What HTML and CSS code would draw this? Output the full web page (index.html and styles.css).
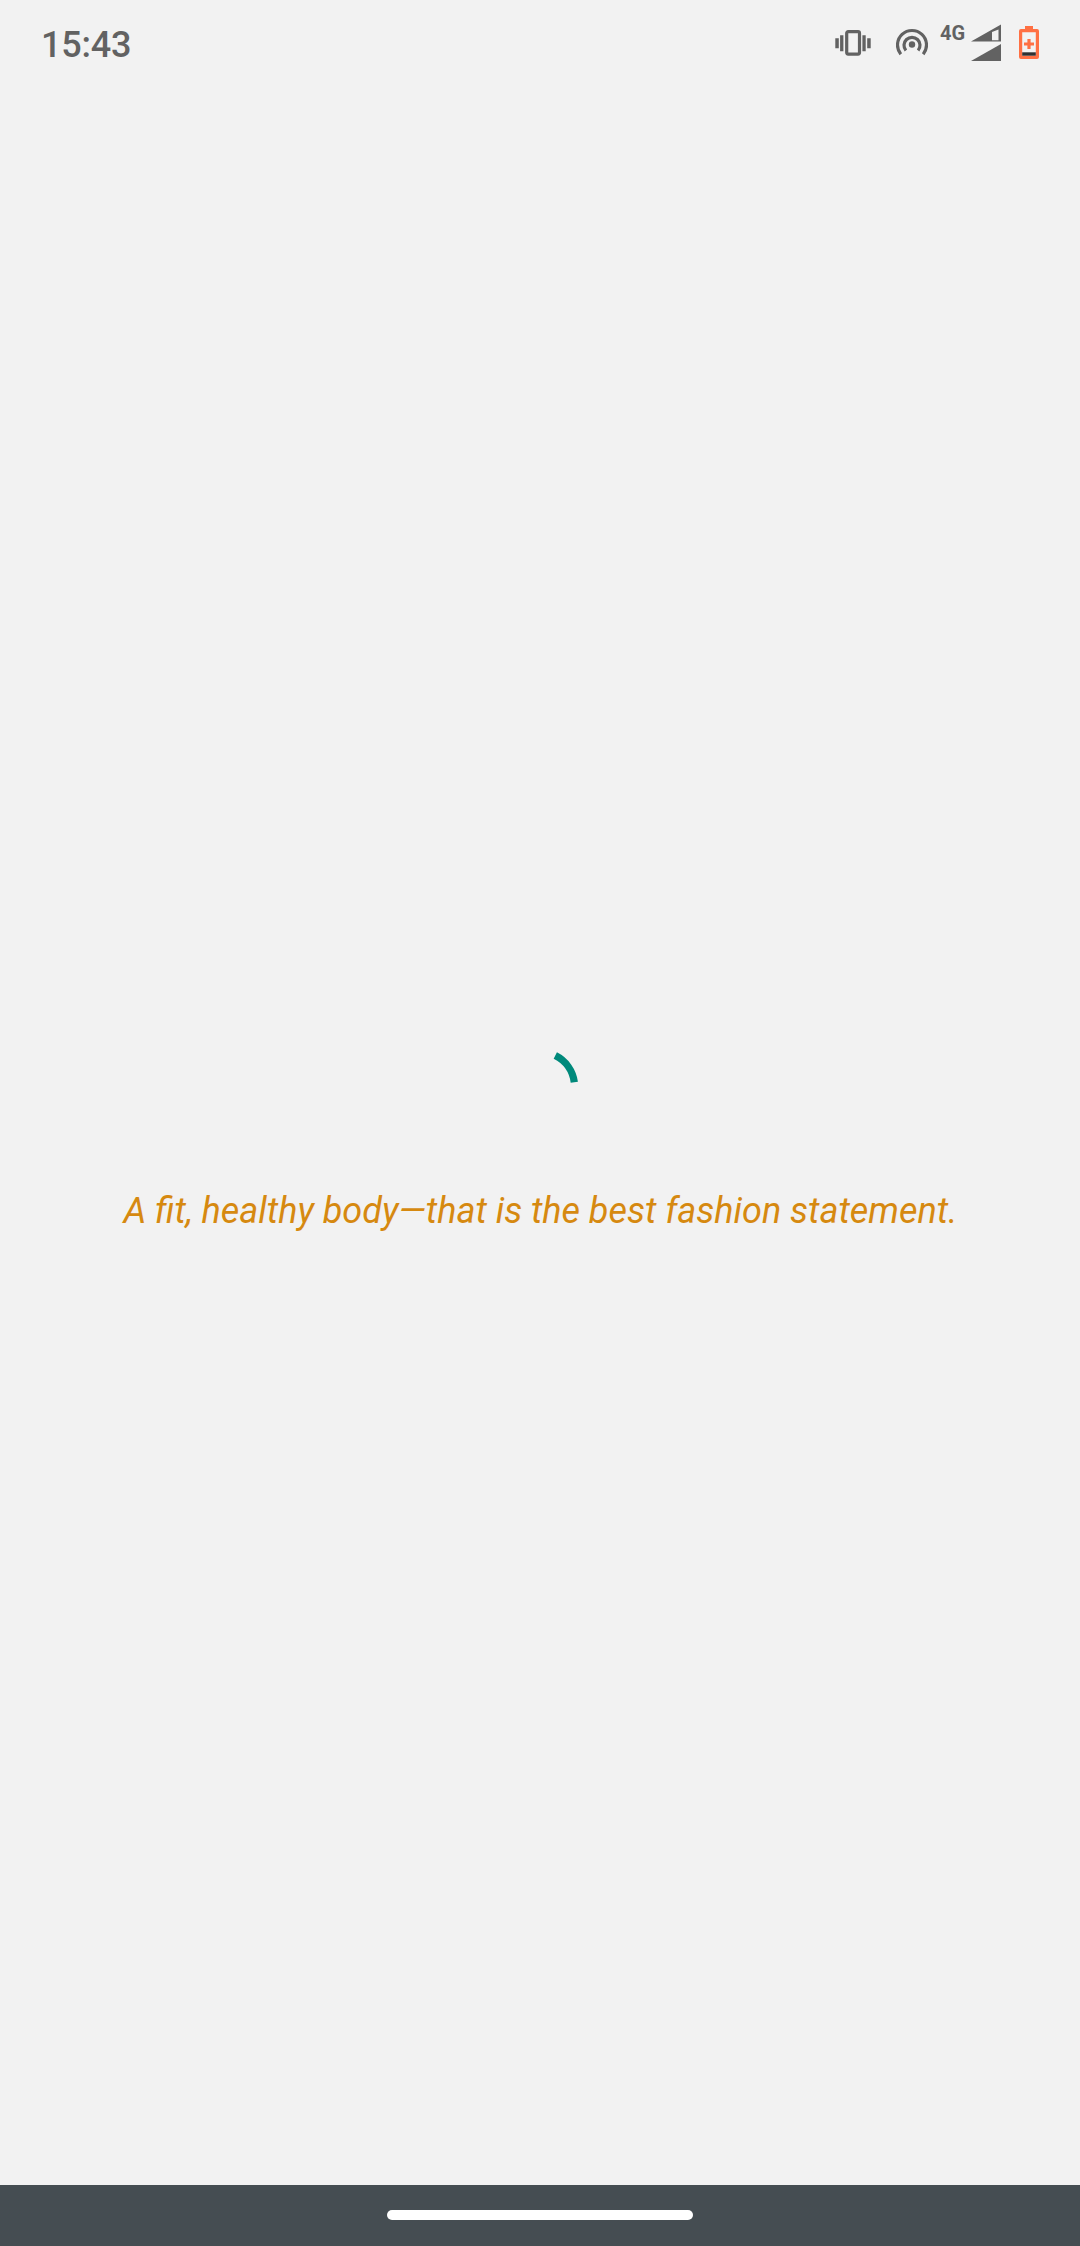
FILE: index.html
```html
<!DOCTYPE html>
<html lang="en">
<head>
<meta charset="utf-8">
<title>Loading</title>
<link rel="stylesheet" href="styles.css">
</head>
<body>
<div class="screen">
  <header class="status-bar">
    <span class="clock">15:43</span>
    <div class="status-icons">
      <svg class="icon-vibrate" width="36" height="28" viewBox="0 0 36 28" fill="currentColor">
        <path d="M0.300 9.200h3.500v10H0.300zM5.100 6.200h3.300v16H5.100zM27.400 6.200h3.300v16h-3.300zM32.200 9.200h3.500v10h-3.500z"/>
        <rect x="11.700" y="2.700" width="12.800" height="22.400" rx="1.500" fill="none" stroke="currentColor" stroke-width="3.200"/>
      </svg>
      <svg class="icon-hotspot" width="32" height="30" viewBox="0 0 32 30" fill="none" stroke="currentColor" stroke-width="3.200">
        <path d="M4.800 26.200A14.500 14.500 0 1 1 27.200 26.200"/>
        <path d="M9.900 22.500A8 8 0 1 1 22.100 22.500"/>
        <circle cx="16" cy="16.500" r="3.200" fill="currentColor" stroke="none"/>
      </svg>
      <span class="network">4G</span>
      <svg class="icon-signal" width="30" height="38" viewBox="0 0 30 38" fill="currentColor">
        <path fill-rule="evenodd" d="M0 18.500L30 1.500v17zM21 9v8.200h6.500V6.500z"/>
        <path d="M0 38L30 21v17z"/>
      </svg>
      <svg class="icon-battery" width="20" height="34" viewBox="0 0 20 34">
        <path fill="#ff7043" fill-rule="evenodd" d="M6 1h8v3h4a2 2 0 0 1 2 2v26a2 2 0 0 1-2 2H2a2 2 0 0 1-2-2V6a2 2 0 0 1 2-2h4zM3.200 7.200v23.500h13.600V7.200z"/>
        <path fill="#ff7043" d="M8.400 14h3.200v3.400H15v3.200h-3.400V24H8.400v-3.400H5v-3.200h3.400z"/>
        <path fill="#303030" d="M3.200 27.300h13.600v3.400H3.200z"/>
      </svg>
    </div>
  </header>
  <main class="content">
    <svg class="spinner" width="80" height="80" viewBox="0 0 80 80" fill="none" stroke="#00897b" stroke-width="7.300">
      <path d="M55.300 8.600A35 35 0 0 1 74.300 35.200"/>
    </svg>
    <p class="quote">A fit, healthy body—that is the best fashion statement.</p>
  </main>
  <footer class="nav-bar"><div class="handle"></div></footer>
</div>
</body>
</html>
```

FILE: styles.css
```css
* {
  box-sizing: border-box;
}

body {
  margin: 0;
  background: #f2f2f2;
  font-family: Roboto, sans-serif;
}

.screen {
  display: flex;
  flex-direction: column;
  height: 2246px;
}

.status-bar {
  display: flex;
  justify-content: space-between;
  height: 88px;
  padding: 23px 41px 0;
  color: #626262;
}

.clock {
  margin-top: 1px;
  font-size: 36px;
  font-weight: 500;
  letter-spacing: -0.25px;
  line-height: 42px;
}

.status-icons {
  display: flex;
  align-items: flex-start;
}

.icon-vibrate {
  margin: 6px 25px 0 0;
}

.icon-hotspot {
  margin: 5px 12px 0 0;
}

.network {
  width: 31px;
  font-size: 20px;
  font-weight: 700;
  line-height: 20px;
}

.icon-signal {
  margin-right: 18px;
}

.icon-battery {
  margin-top: 2px;
}

.content {
  display: flex;
  flex: 1;
  flex-direction: column;
  align-items: center;
  padding-top: 959px;
}

.quote {
  margin: 63px 0 0 1px;
  color: #d68910;
  font-size: 36px;
  font-style: italic;
  line-height: 42px;
  white-space: nowrap;
  word-spacing: -0.1px;
}

.nav-bar {
  display: flex;
  justify-content: center;
  height: 61px;
  padding-top: 25px;
  background: #454d52;
}

.handle {
  width: 306px;
  height: 10px;
  border-radius: 5px;
  background: #fff;
}
```
